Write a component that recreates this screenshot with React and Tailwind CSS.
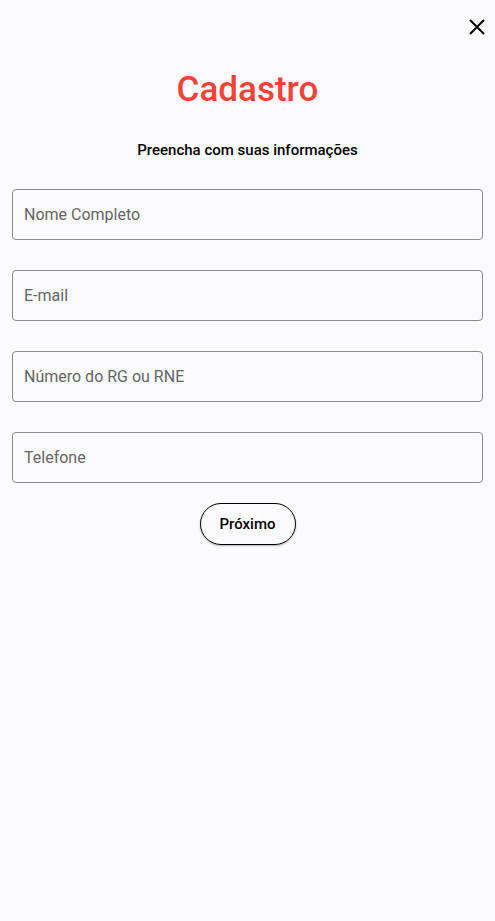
const FIELDS = ["Nome Completo", "E-mail", "Número do RG ou RNE", "Telefone"];

export default function App() {
  return (
    <div className="min-h-[921px] bg-[#fbfbfd] font-['Roboto',sans-serif] relative">
      <button className="absolute right-[9px] top-[18px] w-[18px] h-[18px] flex items-center justify-center text-black">
        <svg width="18" height="18" viewBox="0 0 18 18" fill="none" stroke="currentColor" strokeWidth="2">
          <path d="M2 2 L16 16 M16 2 L2 16" />
        </svg>
      </button>

      <div className="flex flex-col items-center pt-[66px] px-3">
        <h1 className="text-[35px] leading-[48px] font-medium text-[#f44336]">Cadastro</h1>
        <p className="mt-[24px] text-[15px] leading-[24px] font-medium text-black">
          Preencha com suas informações
        </p>

        <div className="w-full mt-[27px] flex flex-col gap-[30px]">
          {FIELDS.map((f) => (
            <input
              key={f}
              placeholder={f}
              className="w-full h-[51px] rounded-[4px] border border-[#8a8a8a] bg-transparent px-[11px] text-[16px] text-black placeholder:text-[#666] outline-none"
            />
          ))}
        </div>

        <button className="mt-[20px] w-[96px] h-[42px] rounded-full border border-black bg-transparent text-[15px] font-medium text-black shadow-[0_1px_2px_rgba(0,0,0,0.3)]">
          Próximo
        </button>
      </div>
    </div>
  );
}
